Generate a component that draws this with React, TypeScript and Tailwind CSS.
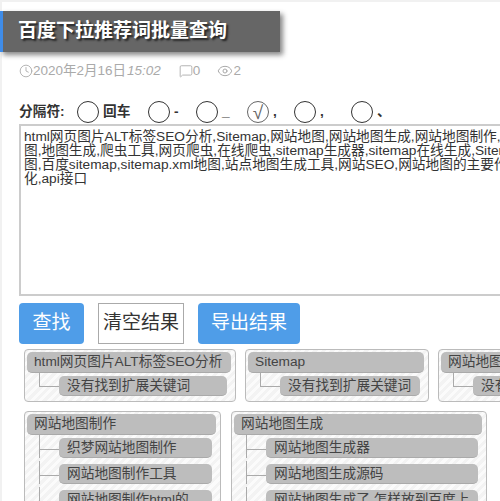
import { Clock, Eye, MessageSquare } from 'lucide-react'

const FONT = "font-['Liberation_Sans','Noto_Sans_CJK_SC',sans-serif]"

const KEYWORDS = [
  'html网页图片ALT标签SEO分析,Sitemap,网站地图,网站地图生成,网站地图制作,网站地',
  '图,地图生成,爬虫工具,网页爬虫,在线爬虫,sitemap生成器,sitemap在线生成,Sitemap',
  '图,百度sitemap,sitemap.xml地图,站点地图生成工具,网站SEO,网站地图的主要作用,优',
  '化,api接口',
].join('\n')

const SEPARATORS = [
  { label: '回车', box: 'w-[71px]' },
  { label: '-', box: 'w-[48px]' },
  { label: '_', box: 'w-[51px]' },
  { label: ',', box: 'w-[47px]', checked: true },
  { label: ',', box: 'w-[57px]' },
  { label: '、', box: 'w-[50px]' },
]

function Radio({ label, box, checked }: { label: string; box: string; checked?: boolean }) {
  return (
    <label className={`flex shrink-0 items-center gap-[4px] ${box}`}>
      <span
        className={`flex h-[22px] w-[22px] shrink-0 items-center justify-center rounded-full border text-[19px] leading-none ${
          checked ? 'border-[#666] text-[#666]' : 'border-[#333]'
        }`}
      >
        {checked ? '√' : ''}
      </span>
      <span className="text-[13.7px] font-bold text-[#333]">{label}</span>
    </label>
  )
}

function Node({ text, last }: { text: string; last?: boolean }) {
  return (
    <div className="relative ml-[32px] mr-[4px] mt-[3px] pb-[3px] last:pb-0">
      {/* tree connector */}
      <span
        className={`absolute left-[-20px] top-[-3px] w-[20px] border-l border-[#aaa] ${
          last ? 'h-[14px] border-b' : 'h-full'
        }`}
      />
      {!last && <span className="absolute left-[-20px] top-[11px] h-px w-[20px] bg-[#aaa]" />}
      <div className="h-[20px] overflow-hidden whitespace-nowrap rounded-[5px] border-b border-[#aaa] bg-[#bdbdbd] pl-[8px] text-[13.7px] leading-[20px] text-[#444]">
        {text}
      </div>
    </div>
  )
}

function Card({ title, items, width }: { title: string; items: string[]; width: string }) {
  return (
    <div
      className={`shrink-0 self-start rounded-[4px] border border-[#bbb] bg-[repeating-linear-gradient(135deg,#f3f3f3_0,#f3f3f3_3px,#fbfbfb_3px,#fbfbfb_6px)] pb-[5px] pl-[2px] pr-[4px] pt-[2px] ${width}`}
    >
      <div className="h-[21px] whitespace-nowrap rounded-[5px] border-b border-[#aaa] bg-[#bdbdbd] pl-[7px] text-[13.7px] leading-[20px] text-[#444]">
        {title}
      </div>
      {items.map((t, i) => (
        <Node key={i} text={t} last={i === items.length - 1} />
      ))}
    </div>
  )
}

export default function App() {
  return (
    <div className={`h-[501px] w-[500px] overflow-hidden bg-white shadow-[inset_2px_2px_0_#f1f1f1] ${FONT}`}>
      <div className="pt-[11px]">
        <h1 className="flex h-[41px] w-[280px] items-center border-l-[3px] border-[#3f8ce8] bg-[#666] pl-[15px] text-[19px] font-bold text-white shadow-[3px_3px_5px_#888] [text-shadow:2px_2px_2px_#222]">
          百度下拉推荐词批量查询
        </h1>
      </div>

      <div className="ml-[19px] mt-[10px] flex h-[18px] items-center text-[13.5px] text-[#aaa]">
        <Clock size={14} strokeWidth={1.5} />
        <span>2020年2月16日</span>
        <i className="ml-[1px]">15:02</i>
        <MessageSquare size={14} strokeWidth={1.5} className="ml-[18px]" />
        <span>0</span>
        <Eye size={16} strokeWidth={1.5} className="ml-[17px]" />
        <span>2</span>
      </div>

      <div className="ml-[19px] mt-[20px] flex h-[24px] items-center">
        <span className="mr-[4px] w-[54px] shrink-0 text-[13.7px] font-bold text-[#333]">分隔符:</span>
        {SEPARATORS.map((s, i) => (
          <Radio key={i} {...s} />
        ))}
      </div>

      <textarea
        readOnly
        wrap="off"
        value={KEYWORDS}
        className="ml-[19px] mt-0 block h-[172px] w-[560px] resize-none overflow-hidden border-2 border-[#ccc] px-[3px] pb-[3px] pt-[4px] text-[13.7px] leading-[14px] text-[#333] outline-none"
      />

      <div className="ml-[19px] mt-[7px] flex h-[41px] gap-[14px] text-[19px]">
        <button className="w-[65px] rounded-[4px] bg-[#4f9de8] text-white">查找</button>
        <button className="w-[86px] border border-[#aaa] bg-white text-[#333]">清空结果</button>
        <button className="w-[102px] rounded-[4px] bg-[#4f9de8] text-white">导出结果</button>
      </div>

      <div className="ml-[24px] mt-[5px] flex gap-[9px]">
        <Card title="html网页图片ALT标签SEO分析" items={['没有找到扩展关键词']} width="w-[212px]" />
        <Card title="Sitemap" items={['没有找到扩展关键词']} width="w-[184px]" />
        <Card title="网站地图" items={['没有找到扩展关键词']} width="w-[184px]" />
      </div>

      <div className="ml-[24px] mt-[9px] flex gap-[10px]">
        <Card
          title="网站地图制作"
          items={['织梦网站地图制作', '网站地图制作工具', '网站地图制作html的', '网站地图制作软件']}
          width="w-[197px]"
        />
        <Card
          title="网站地图生成"
          items={['网站地图生成器', '网站地图生成源码', '网站地图生成了 怎样放到百度上', '网站地图生成工具']}
          width="w-[256px]"
        />
      </div>
    </div>
  )
}
